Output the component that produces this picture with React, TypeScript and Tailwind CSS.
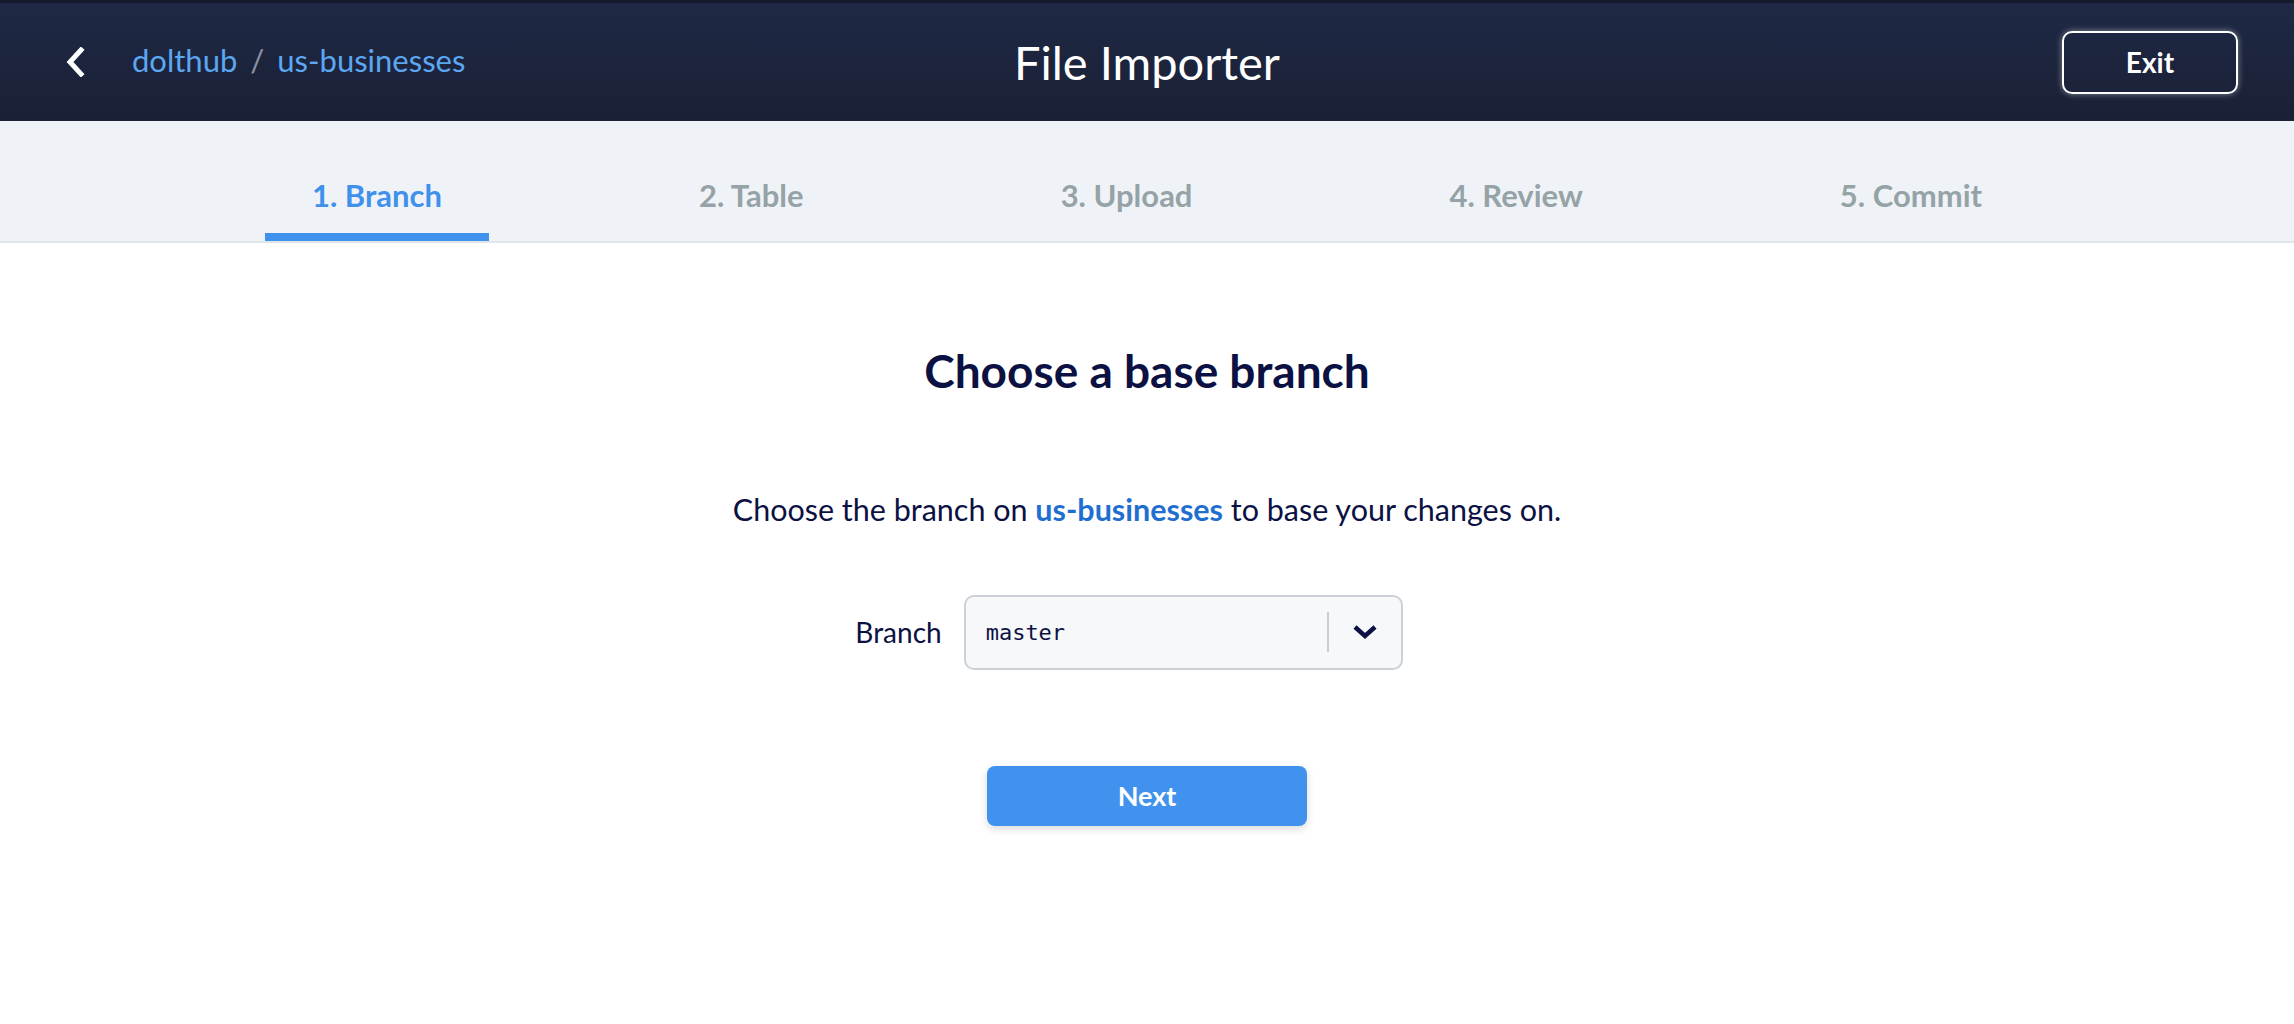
import React from 'react';

const tabs = ['1. Branch', '2. Table', '3. Upload', '4. Review', '5. Commit'];

function Header() {
  return (
    <header className="h-[121px] grid grid-cols-3 items-center px-[56px] border-t-[3px] border-[#151b2b] bg-gradient-to-b from-[#1f2945] to-[#1a2036]">
      <div className="flex items-center -mt-[4px]">
        <button className="ml-[8px] mr-[46px] text-white mt-[4px]">
          <svg width="22" height="30" viewBox="0 0 22 30" fill="none">
            <path d="M17 3 L6 15 L17 27" stroke="currentColor" strokeWidth="5" strokeLinecap="square" />
          </svg>
        </button>
        <a className="text-[31px] text-[#5ca7f2]">dolthub</a>
        <span className="mx-[13px] text-[31px] text-[#8b93a3]">/</span>
        <a className="text-[31px] text-[#5ca7f2]">us-businesses</a>
      </div>
      <h1 className="text-center text-[47px] text-white">File Importer</h1>
      <div className="flex justify-end">
        <button className="w-[176px] h-[63px] rounded-[10px] border-2 border-white text-white text-[28px] font-bold shadow-[0_0_6px_rgba(255,255,255,0.45)]">
          Exit
        </button>
      </div>
    </header>
  );
}

function Tabs() {
  return (
    <nav className="h-[122px] bg-[#eff3f8] border-b-2 border-[#dfe5ec] flex justify-center items-end gap-[163px]">
      {tabs.map((t, i) => (
        <div
          key={t}
          className={`px-[47px] pb-[15px] border-b-[8px] text-[31px] font-bold ${
            i === 0 ? 'border-[#3f91ec] text-[#3f91ec]' : 'border-transparent text-[#95a3a6]'
          }`}
        >
          {t}
        </div>
      ))}
    </nav>
  );
}

export default function App() {
  return (
    <div className="min-h-screen bg-white font-['Lato','Noto_Sans',sans-serif]">
      <Header />
      <Tabs />
      <main className="flex flex-col items-center pt-[100px]">
        <h2 className="text-[46px] font-bold text-[#0b1142] leading-[56px]">Choose a base branch</h2>
        <p className="mt-[88px] text-[30.5px] text-[#0b1142]">
          Choose the branch on <a className="text-[#1f6fd0] font-bold">us-businesses</a> to base your changes on.
        </p>
        <div className="mt-[62px] flex items-center gap-[22px] ml-[-36px]">
          <label className="text-[28px] text-[#0b1142]">Branch</label>
          <div className="w-[439px] h-[75px] rounded-[10px] border-2 border-[#cbd1d7] bg-[#f6f8fa] flex items-center">
            <span className="flex-1 pl-[20px] font-['DejaVu_Sans_Mono',monospace] text-[22px] text-[#0b1142]">master</span>
            <span className="w-[2px] h-[40px] bg-[#c9ced4]" />
            <span className="w-[72px] flex justify-center text-[#0b1142]">
              <svg width="26" height="16" viewBox="0 0 26 16" fill="none">
                <path d="M3 3 L13 12 L23 3" stroke="currentColor" strokeWidth="4.5" />
              </svg>
            </span>
          </div>
        </div>
        <button className="mt-[96px] w-[320px] h-[60px] rounded-[8px] bg-[#4192ef] text-white text-[27px] font-bold shadow-[0_3px_8px_rgba(0,0,0,0.15)]">
          Next
        </button>
      </main>
    </div>
  );
}
